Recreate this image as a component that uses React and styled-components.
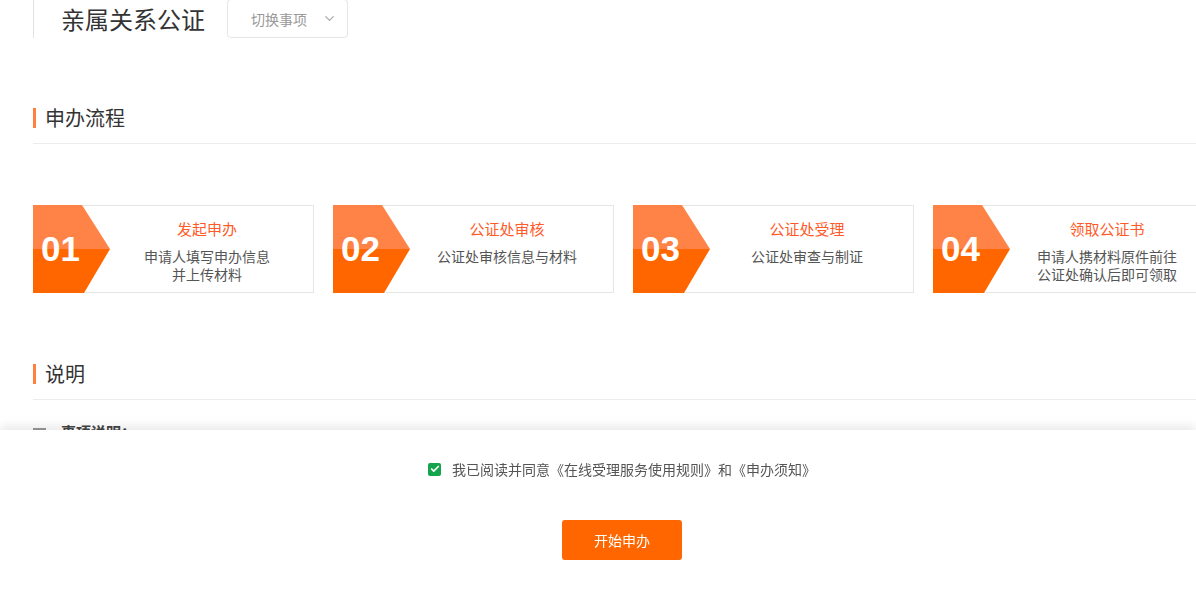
import React from "react";
import styled, { createGlobalStyle } from "styled-components";
import { ChevronDown, Check } from "lucide-react";

const Global = createGlobalStyle`
  html, body { margin: 0; padding: 0; background: #fff; }
  body {
    font-family: "Noto Sans CJK SC", "Noto Sans", "Liberation Sans", sans-serif;
    overflow: hidden;
    width: 1196px;
    height: 593px;
  }
  * { box-sizing: border-box; }
`;

const Page = styled.div`
  padding-left: 33px;
  width: 1196px;
  overflow: hidden;
`;

const Header = styled.div`
  display: flex;
  align-items: flex-start;
  height: 38px;
`;

const HeaderLine = styled.div`
  width: 1px;
  height: 38px;
  background: #e2e2e2;
`;

const PageTitle = styled.h1`
  margin: 0 0 0 27px;
  font-size: 24px;
  font-weight: 400;
  line-height: 38px;
  height: 38px;
  color: #333;
  letter-spacing: 0;
`;

const Switcher = styled.div`
  margin: -1px 0 0 22px;
  width: 121px;
  height: 39px;
  border: 1px solid #e6e6e6;
  border-radius: 4px;
  display: flex;
  align-items: center;
  padding-left: 23px;
  padding-right: 10px;
  color: #999;
  font-size: 14px;
  justify-content: space-between;
`;

const SectionHead = styled.div`
  margin-top: ${(p) => p.$top}px;
  padding-bottom: 15px;
  border-bottom: 1px solid #ececec;
  margin-right: -40px;
`;

const SectionTitle = styled.h2`
  margin: 0;
  height: 20px;
  border-left: 3px solid #ff8040;
  padding-left: 9px;
  font-size: 20px;
  line-height: 20px;
  font-weight: 400;
  color: #333;
`;

const Steps = styled.div`
  display: flex;
  gap: 19px;
  margin-top: 61px;
  width: 1300px;
`;

const Card = styled.div`
  flex: 0 0 281px;
  height: 88px;
  border: 1px solid #e6e6e6;
  display: flex;
  background: #fff;
`;

const Arrow = styled.div`
  flex: 0 0 77px;
  height: 88px;
  margin: -1px 0 -1px -1px;
  clip-path: polygon(0 0, 49px 0, 77px 50%, 51px 100%, 0 100%);
  background: linear-gradient(to bottom, #ff8346 50%, #ff6600 50%);
  display: flex;
  align-items: center;
  padding-left: 8px;
  color: #fff;
  font-family: "Liberation Sans", Arial, sans-serif;
  font-weight: 700;
  font-size: 35px;
  letter-spacing: 0;
`;

const StepText = styled.div`
  flex: 1;
  margin-left: -9px;
  text-align: center;
  padding-top: 13px;
`;

const StepTitle = styled.div`
  font-size: 15px;
  line-height: 20px;
  color: #ff5a28;
`;

const StepDesc = styled.div`
  margin-top: 8px;
  font-size: 14px;
  line-height: 18px;
  color: #555;
`;

const Item = styled.div`
  margin-top: 21px;
  display: flex;
  align-items: center;
  height: 20px;
  font-size: 15px;
  font-weight: 700;
  color: #444;
`;

const Dash = styled.span`
  width: 13px;
  height: 2px;
  background: #999;
  margin-right: 15px;
  margin-bottom: 4px;
`;

const Footer = styled.div`
  position: fixed;
  left: 0;
  right: 0;
  bottom: 0;
  height: 163px;
  background: #fff;
  box-shadow: 0 -4px 10px rgba(0, 0, 0, 0.09);
  display: flex;
  flex-direction: column;
  align-items: center;
  padding-left: 48px;
  padding-top: 29px;
`;

const AgreeRow = styled.label`
  display: flex;
  align-items: center;
  height: 20px;
  font-size: 14px;
  color: #555;
  gap: 11px;
`;

const Box = styled.span`
  width: 13px;
  height: 13px;
  border-radius: 2px;
  background: #14a54c;
  display: flex;
  align-items: center;
  justify-content: center;
`;

const StartButton = styled.button`
  margin-top: 41px;
  width: 120px;
  height: 40px;
  border: none;
  border-radius: 3px;
  background: #ff6600;
  color: #fff;
  font-size: 14px;
  font-family: inherit;
`;

const steps = [
  { n: "01", t: "发起申办", d: ["申请人填写申办信息", "并上传材料"] },
  { n: "02", t: "公证处审核", d: ["公证处审核信息与材料"] },
  { n: "03", t: "公证处受理", d: ["公证处审查与制证"] },
  { n: "04", t: "领取公证书", d: ["申请人携材料原件前往", "公证处确认后即可领取"] },
];

export default function App() {
  return (
    <>
      <Global />
      <Page>
        <Header>
          <HeaderLine />
          <PageTitle>亲属关系公证</PageTitle>
          <Switcher>
            <span>切换事项</span>
            <ChevronDown size={15} color="#aaa" strokeWidth={2} />
          </Switcher>
        </Header>

        <SectionHead $top={70}>
          <SectionTitle>申办流程</SectionTitle>
        </SectionHead>

        <Steps>
          {steps.map((s) => (
            <Card key={s.n}>
              <Arrow>{s.n}</Arrow>
              <StepText>
                <StepTitle>{s.t}</StepTitle>
                <StepDesc>
                  {s.d.map((l) => (
                    <div key={l}>{l}</div>
                  ))}
                </StepDesc>
              </StepText>
            </Card>
          ))}
        </Steps>

        <SectionHead $top={71}>
          <SectionTitle>说明</SectionTitle>
        </SectionHead>

        <Item>
          <Dash />
          事项说明：
        </Item>
      </Page>

      <Footer>
        <AgreeRow>
          <Box>
            <Check size={10} color="#fff" strokeWidth={4} />
          </Box>
          我已阅读并同意《在线受理服务使用规则》和《申办须知》
        </AgreeRow>
        <StartButton>开始申办</StartButton>
      </Footer>
    </>
  );
}
